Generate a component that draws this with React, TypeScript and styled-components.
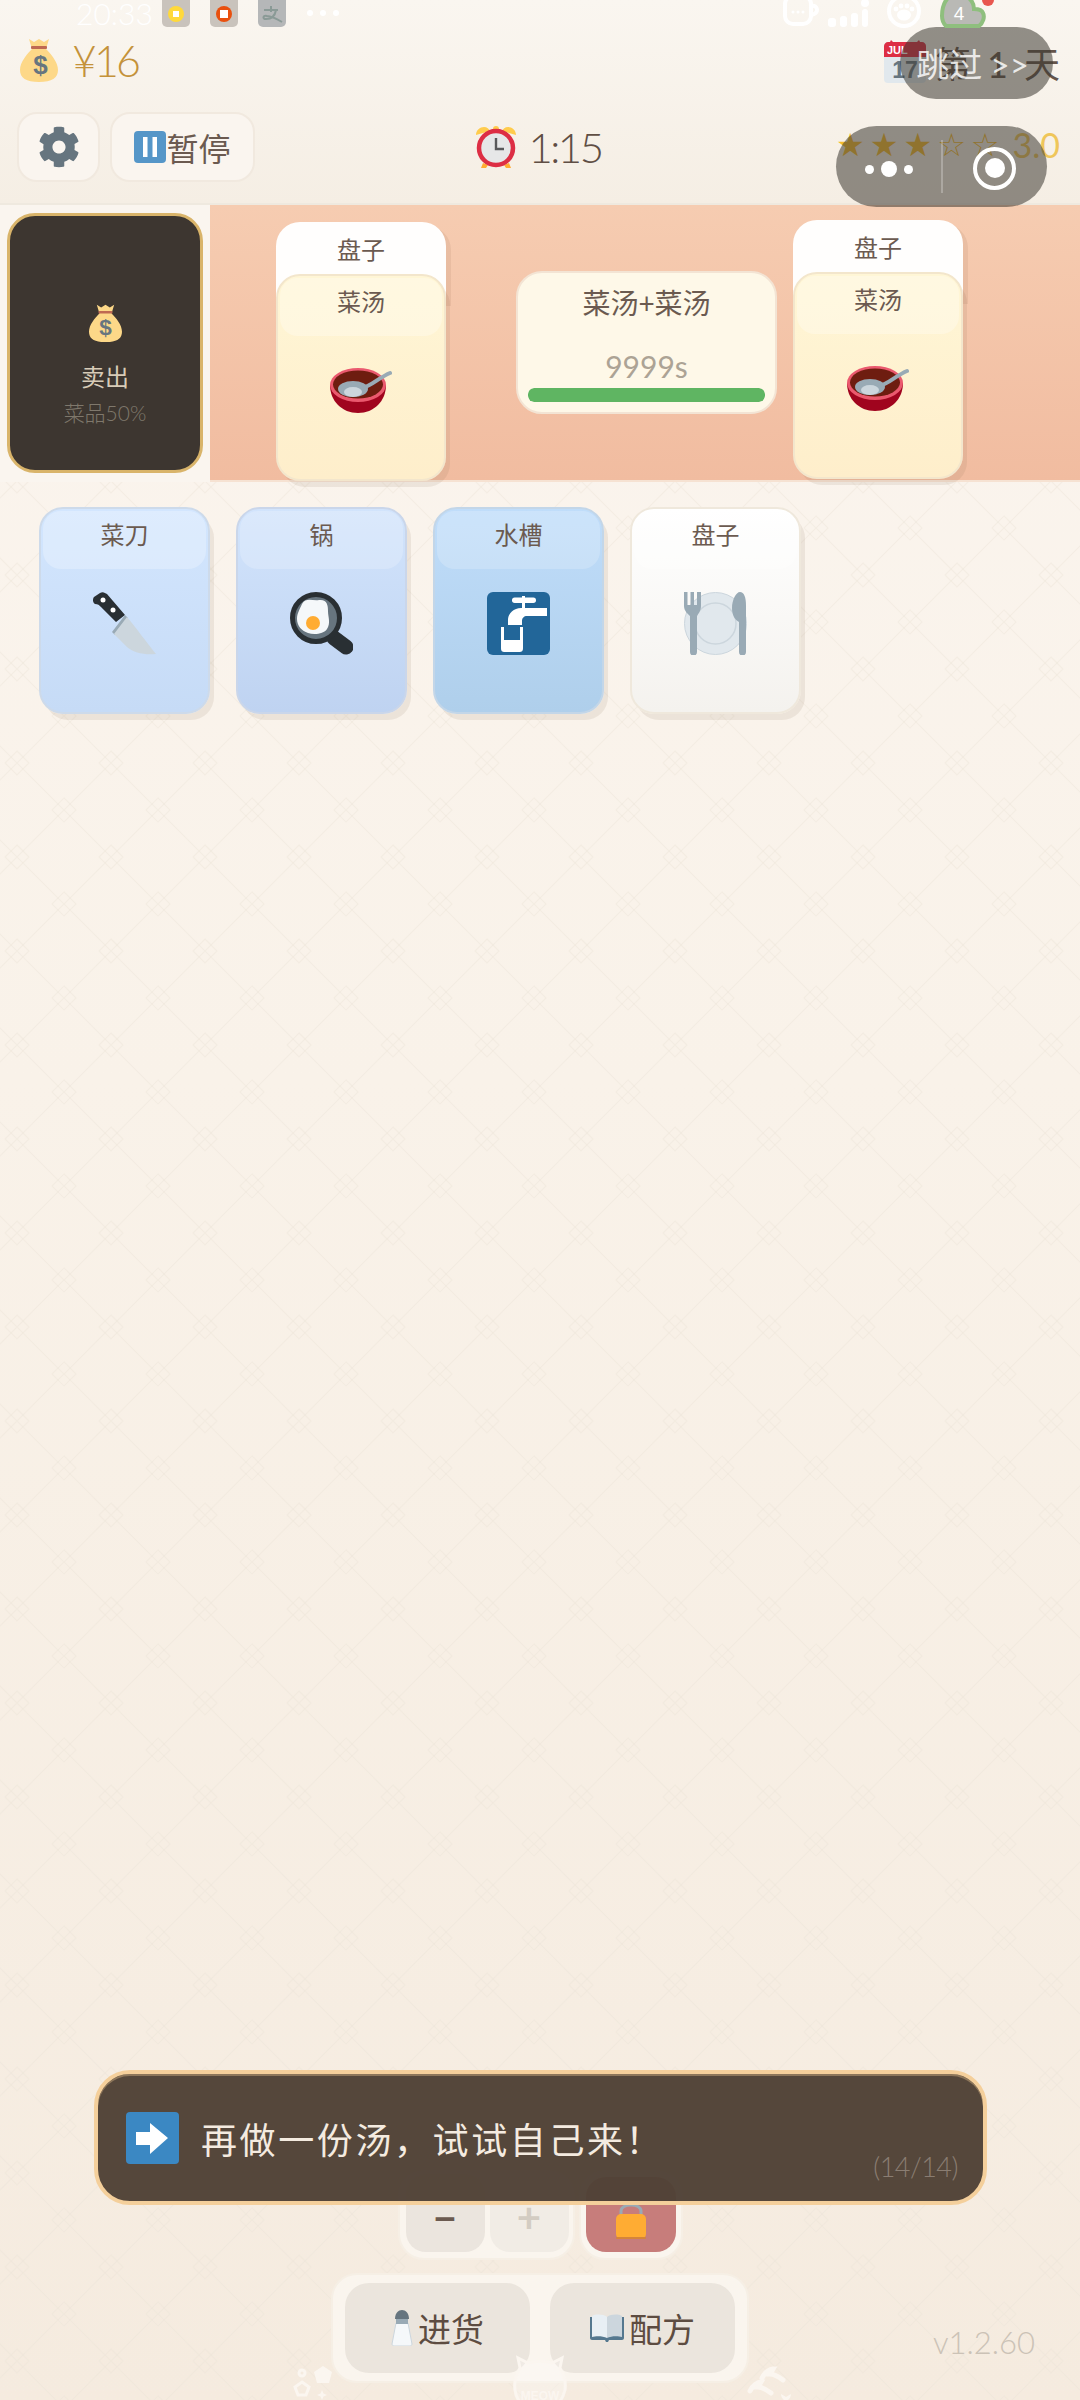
import React from "react";
import styled, {createGlobalStyle} from "styled-components";
import {FaCog} from "react-icons/fa";

const GlobalStyle = createGlobalStyle`
  html, body {
    margin: 0;
    padding: 0;
    background: #f9f2e9;
  }

  * {
    box-sizing: border-box;
  }

  body {
    font-family: Lato, "Noto Sans CJK SC", sans-serif;
    font-weight: 400;
  }
`;

const tile = `url("data:image/svg+xml,%3Csvg xmlns='http://www.w3.org/2000/svg' width='94' height='94' fill='none' stroke='%23ebe4d8' stroke-opacity='.4' stroke-width='1.2'%3E%3Cpath d='M0 0L94 94M94 0L0 94'/%3E%3Cpath d='M47 35L59 47L47 59L35 47ZM0 -12L12 0L0 12L-12 0ZM94 -12L106 0L94 12L82 0ZM0 82L12 94L0 106L-12 94ZM94 82L106 94L94 106L82 94Z'/%3E%3C/svg%3E")`;

const Page = styled.div`
  position: relative;
  width: 1080px;
  height: 2400px;
  overflow: hidden;
  display: flex;
  flex-direction: column;
  color: #6b5a50;
  background: ${tile} 64px 58px, linear-gradient(180deg, #fbf5ef 0%, #f9f2e9 45%, #f5ebdf 100%);
`;

/* system overlays */
const StatusBar = styled.div`
  position: absolute;
  left: 0;
  top: 0;
  width: 100%;
  height: 30px;
  overflow: hidden;
  display: flex;
  align-items: flex-start;
  z-index: 5;
`;

const StatusTime = styled.div`
  margin: -7px 0 0 76px;
  width: 86px;
  font-size: 30px;
  line-height: 40px;
  font-weight: 300;
  color: #fff;
`;

const AppBadge = styled.div<{ $bg: string }>`
  width: 28px;
  height: 27px;
  margin-right: 20px;
  border-radius: 0 0 5px 5px;
  background: ${p => p.$bg};
  display: flex;
  align-items: center;
  justify-content: center;
`;

const StatusDots = styled.div`
  margin: 10px 0 0 1px;
  display: flex;
  gap: 7px;
`;

const StatusDot = styled.span`
  width: 6px;
  height: 6px;
  border-radius: 50%;
  background: #fff;
`;

const StatusRight = styled.div`
  margin-left: auto;
  margin-right: 69px;
`;

const SkipPill = styled.div`
  position: absolute;
  left: 900px;
  top: 27px;
  width: 153px;
  height: 72px;
  border-radius: 36px;
  background: rgba(60, 56, 50, 0.55);
  color: rgba(255, 255, 255, 0.82);
  font-size: 33px;
  display: flex;
  align-items: center;
  justify-content: center;
  padding-right: 8px;
  white-space: pre;
  z-index: 4;
`;

const Capsule = styled.div`
  position: absolute;
  left: 836px;
  top: 126px;
  width: 211px;
  height: 81px;
  border-radius: 41px;
  background: rgba(60, 56, 50, 0.55);
  display: grid;
  grid-template-columns: 105px 1px 105px;
  align-items: center;
  justify-items: center;
  z-index: 4;
`;

const CapsuleDots = styled.div`
  margin-top: 5px;
  display: flex;
  align-items: center;
  gap: 7px;
`;

const CapsuleDot = styled.span<{ $big?: boolean }>`
  width: ${p => (p.$big ? 16 : 9)}px;
  height: ${p => (p.$big ? 16 : 9)}px;
  border-radius: 50%;
  background: #fff;
`;

const CapsuleLine = styled.span`
  width: 2px;
  height: 53px;
  background: rgba(255, 255, 255, 0.25);
`;

const CapsuleRing = styled.span`
  margin-top: 3px;
  width: 43px;
  height: 43px;
  border-radius: 50%;
  border: 4px solid #fff;
  display: flex;
  align-items: center;
  justify-content: center;

  &::after {
    content: "";
    width: 20px;
    height: 20px;
    border-radius: 50%;
    background: #fff;
  }
`;

/* header */
const Header = styled.header`
  height: 205px;
  padding: 40px 20px 0 17px;
  background: linear-gradient(180deg, #faf6f0 0%, #f5eee4 100%);
  border-bottom: 2px solid #efe9df;
`;

const TopRow = styled.div`
  height: 43px;
  display: flex;
  align-items: center;
  justify-content: space-between;
  padding-left: 3px;
`;

const Money = styled.div`
  display: flex;
  align-items: center;
  gap: 14px;
  margin-top: -3px;
  font-size: 43px;
  font-weight: 300;
  letter-spacing: -3px;
  color: #c4923a;
`;

const DayLabel = styled.div`
  display: flex;
  align-items: center;
  gap: 9px;
  font-size: 36px;
  word-spacing: 7px;
  color: #64544a;
`;

const ControlRow = styled.div`
  margin-top: 29px;
  display: grid;
  grid-template-columns: 1fr auto 1fr;
  align-items: center;
`;

const ButtonGroup = styled.div`
  display: flex;
  gap: 10px;
`;

const RoundButton = styled.div<{ $width: number }>`
  width: ${p => p.$width}px;
  height: 70px;
  border-radius: 20px;
  background: #faf5ef;
  border: 2px solid #f1e9df;
  display: flex;
  align-items: center;
  justify-content: center;
  font-size: 32px;
  color: #6b5a50;
`;

const Clock = styled.div`
  display: flex;
  align-items: center;
  gap: 11px;
  font-size: 42px;
  font-weight: 300;
  letter-spacing: -2.5px;
  color: #5f4e44;
`;

const Rating = styled.div`
  justify-self: end;
  display: flex;
  align-items: center;
  gap: 8px;
  margin-top: -5px;
  font-size: 34px;
  color: #efc65a;
`;

const Stars = styled.span`
  font-family: "DejaVu Sans", sans-serif;
  font-size: 32px;
  line-height: 40px;
  letter-spacing: 5px;
  color: #f5bb2c;
`;

/* cooking band */
const Band = styled.section`
  height: 277px;
  display: flex;
`;

const SellSlot = styled.div`
  width: 210px;
  padding: 8px 7px;
  background: #faf5ef;
`;

const SellCard = styled.div`
  width: 196px;
  height: 260px;
  padding-top: 88px;
  border-radius: 28px;
  border: 3px solid #d9b46a;
  background: #3d3630;
  display: flex;
  flex-direction: column;
  align-items: center;
`;

const SellTitle = styled.div`
  margin-top: 17px;
  font-size: 24px;
  line-height: 36px;
  color: #d8ccb8;
`;

const SellSub = styled.div`
  font-size: 21px;
  line-height: 36px;
  font-weight: 300;
  color: #7f786c;
`;

const Counter = styled.div`
  flex: 1;
  padding-left: 66px;
  display: flex;
  align-items: flex-start;
  background: linear-gradient(180deg, #f6ccb1 0%, #f1bca0 100%);
  border-bottom: 2px solid #f6e2d2;
`;

const Stack = styled.div<{ $top: number }>`
  width: 170px;
  margin-top: ${p => p.$top}px;
`;

const cardTones = {
  white: {from: "#ffffff", to: "#f4f2ee", border: "#efe8dc", head: "rgba(255,255,255,.3)"},
  soup: {from: "#fff6d6", to: "#feeecb", border: "#f3e6cc", head: "rgba(255,255,255,.28)"},
  knife: {from: "#d3e6fe", to: "#c6dbf6", border: "#cddaea", head: "rgba(255,255,255,.25)"},
  pan: {from: "#d2e4fc", to: "#bfd3f1", border: "#cad6ea", head: "rgba(255,255,255,.2)"},
  sink: {from: "#c0ddfa", to: "#afcfeb", border: "#c3d6e8", head: "rgba(255,255,255,.2)"}
};

type Tone = keyof typeof cardTones;

const PlateBack = styled.div`
  height: 80px;
  padding-top: 6px;
  border-radius: 24px 24px 0 0;
  background: #fffefd;
  box-shadow: 5px 4px 0 rgba(130, 90, 60, 0.1);
  font-size: 24px;
  line-height: 44px;
  text-align: center;
  color: #6b5a50;
`;

const Card = styled.div<{ $tone: Tone; $stacked?: boolean }>`
  position: relative;
  width: ${p => (p.$stacked ? 170 : 171)}px;
  height: 207px;
  margin-top: ${p => (p.$stacked ? -28 : 0)}px;
  padding: 2px;
  border-radius: 24px;
  border: 2px solid ${p => cardTones[p.$tone].border};
  background: linear-gradient(180deg, ${p => cardTones[p.$tone].from} 0%, ${p => cardTones[p.$tone].to} 100%);
  box-shadow: 5px 7px 0 -1px rgba(130, 100, 70, 0.11);
  display: flex;
  flex-direction: column;
  align-items: center;
`;

const CardHead = styled.div<{ $tone: Tone }>`
  align-self: stretch;
  height: 58px;
  border-radius: 18px;
  background: ${p => cardTones[p.$tone].head};
  font-size: 24px;
  line-height: 48px;
  text-align: center;
  color: #6b5a50;
`;

const CardIcon = styled.div`
  margin-top: 23px;
  width: 63px;
  height: 63px;
  display: flex;
  align-items: center;
  justify-content: center;
`;

const RecipeCard = styled.div`
  width: 261px;
  height: 143px;
  margin: 66px 16px 0 70px;
  padding: 0 10px;
  border-radius: 26px;
  border: 2px solid #f3e4d4;
  background: #fef8e8;
  text-align: center;
`;

const RecipeTitle = styled.div`
  margin-top: 10px;
  font-size: 28px;
  line-height: 40px;
  color: #6b5a50;
`;

const RecipeTime = styled.div`
  margin-top: 23px;
  font-size: 30px;
  line-height: 40px;
  color: #aca395;
`;

const ProgressTrack = styled.div`
  height: 14px;
  margin-top: 2px;
  border-radius: 6px;
  overflow: hidden;
`;

const ProgressFill = styled.div`
  height: 100%;
  border-radius: 6px;
  background: #5fb562;
`;

/* tools */
const ToolRow = styled.section`
  padding: 25px 39px 0;
  display: flex;
  gap: 26px;
`;

/* bottom controls */
const Bottom = styled.section`
  margin-top: auto;
  padding-bottom: 17px;
  display: flex;
  flex-direction: column;
  align-items: center;
  gap: 13px;
`;

const StepperRow = styled.div`
  display: flex;
  gap: 4px;
`;

const Tray = styled.div<{ $pad: string; $gap?: number }>`
  display: flex;
  gap: ${p => p.$gap ?? 0}px;
  padding: ${p => p.$pad};
  border-radius: 26px;
  background: #faf5ee;
  border: 2px solid #f6efe5;
`;

const NavTray = styled(Tray)`
  grid-column: 2;
`;

const StepButton = styled.div<{ $faded?: boolean }>`
  width: 79px;
  height: 78px;
  padding-top: 22px;
  border-radius: 20px;
  background: ${p => (p.$faded ? "#f1ece5" : "#ebe5de")};
  text-align: center;
  font-size: 42px;
  line-height: 42px;
  font-weight: 700;
  color: ${p => (p.$faded ? "#d3ccc2" : "#6b5a50")};
`;

const LockButton = styled.div`
  width: 90px;
  height: 75px;
  padding-top: 26px;
  border-radius: 20px;
  background: #c77d7b;
  display: flex;
  justify-content: center;
`;

const NavRow = styled.div`
  align-self: stretch;
  display: grid;
  grid-template-columns: 1fr auto 1fr;
  align-items: center;
`;

const NavButton = styled.div`
  width: 185px;
  height: 90px;
  border-radius: 24px;
  background: #ebe5dd;
  display: flex;
  align-items: center;
  justify-content: center;
  gap: 5px;
  font-size: 33px;
  color: #5d4c41;
`;

const Version = styled.div`
  grid-column: 3;
  justify-self: end;
  margin: 27px 45px 0 0;
  font-size: 31px;
  font-weight: 300;
  color: #cbc2b6;
`;

const Decor = styled.svg`
  position: absolute;
  left: 290px;
  top: 2350px;
  z-index: 2;
`;

const Tip = styled.div`
  position: absolute;
  left: 94px;
  top: 2070px;
  width: 893px;
  height: 135px;
  padding: 0 28px 0 28px;
  border-radius: 36px;
  border: 4px solid #f4cf9b;
  background: rgba(80, 65, 54, 0.97);
  box-shadow: inset 0 2px 0 #8d765a;
  display: flex;
  align-items: center;
  gap: 22px;
  z-index: 3;
`;

const TipText = styled.div`
  font-size: 36px;
  letter-spacing: 2.6px;
  color: #f4ebe0;
`;

const TipCount = styled.div`
  position: absolute;
  right: 25px;
  bottom: 18px;
  font-size: 27px;
  font-weight: 300;
  letter-spacing: -0.5px;
  color: #8a7d72;
`;

/* drawings */
const MoneyBag = ({size}: { size: number }) => (
    <svg width={size} height={size * 44 / 38} viewBox="0 0 38 44">
        <path fill="#FDD888" d="M9 1l5 3 5-3 5 3 5-3-3 10c5 5 12 13 12 21 0 8-6 12-19 12S0 40 0 32c0-8 7-16 12-21z"/>
        <rect x="11" y="8" width="16" height="3" rx="1" fill="#BF6952"/>
        <text x="19" y="36" textAnchor="middle" fontSize="26" fontWeight="700" fontFamily="Liberation Sans" fill="#67757F">$</text>
    </svg>
);

const PauseIcon = () => (
    <svg width="32" height="32" viewBox="0 0 32 32">
        <rect width="32" height="32" rx="4" fill="#5596c8"/>
        <rect x="9" y="6" width="4.5" height="20" fill="#fff"/>
        <rect x="18.5" y="6" width="4.5" height="20" fill="#fff"/>
    </svg>
);

const AlarmIcon = () => (
    <svg width="42" height="42" viewBox="0 0 42 42">
        <path fill="#FFCC4D" d="M1 9c0-5 4-8 8-8 3 0 5 2 6 4zM41 9c0-5-4-8-8-8-3 0-5 2-6 4z"/>
        <circle cx="21" cy="3" r="3" fill="#FFCC4D"/>
        <path fill="#FFAC33" d="M8 37l-2 5h5l2-3zM34 37l2 5h-5l-2-3z"/>
        <circle cx="21" cy="22" r="17" fill="#E6E7E8" stroke="#DD2E44" strokeWidth="4.5"/>
        <path d="M21 12v11h8" fill="none" stroke="#58595B" strokeWidth="2.4"/>
    </svg>
);

const CalendarIcon = () => (
    <svg width="42" height="43" viewBox="0 0 42 43">
        <rect y="2" width="42" height="41" rx="4" fill="#E1E8ED"/>
        <path fill="#DD2E44" d="M0 6c0-2 2-4 4-4h2l1-2 2 2h24l2-2 1 2h2c2 0 4 2 4 4v11H0z"/>
        <text x="3" y="14" fontSize="11" fontWeight="700" fontFamily="Liberation Sans" fill="#fff">JUL</text>
        <text x="21" y="38" textAnchor="middle" fontSize="23" fontWeight="700" fontFamily="Liberation Sans" fill="#66757F">17</text>
    </svg>
);

const BowlIcon = () => (
    <svg width="62" height="45" viewBox="0 0 62 45">
        <path fill="#A0041E" d="M0 17c0 16 12 28 28 28s28-12 28-28z"/>
        <ellipse cx="28" cy="17" rx="28" ry="17" fill="#EA596E"/>
        <ellipse cx="28" cy="16.5" rx="25" ry="14" fill="#6E1D10"/>
        <path d="M32 20C42 18 48 10 60 5" fill="none" stroke="#99AAB5" strokeWidth="4" strokeLinecap="round"/>
        <ellipse cx="23" cy="21" rx="15" ry="8" fill="#99AAB5"/>
        <ellipse cx="23" cy="24" rx="9" ry="5" fill="#CCD6DD"/>
    </svg>
);

const KnifeIcon = () => (
    <svg width="63" height="63" viewBox="0 0 63 63">
        <path fill="#292F33" d="M7 1c3-2 5 0 7 1l18 21-9 7L8 15c-2-2-3-3-6-3-3-2-2-6-1-7z"/>
        <circle cx="10" cy="8" r="2.5" fill="#fff"/>
        <circle cx="20" cy="18" r="2.5" fill="#fff"/>
        <path fill="#99AAB5" d="M32 23l3 3L22 43l-3-3z"/>
        <path fill="#CCD6DD" d="M34 25c10 12 20 26 29 37-12 1-22-1-29-7L21 42z"/>
    </svg>
);

const PanIcon = () => (
    <svg width="63" height="63" viewBox="0 0 63 63">
        <path d="M44 46l12 9" stroke="#292F33" strokeWidth="15" strokeLinecap="round"/>
        <circle cx="26" cy="26" r="23.5" fill="#67757F" stroke="#292F33" strokeWidth="5"/>
        <path fill="#F5F8FA" d="M12 12c4-7 10-3 17-4 8-1 9 5 9 11 0 6 3 12-1 18-3 5-13 6-19 4-6-2-11-7-11-14 0-6 3-10 5-15z"/>
        <circle cx="23" cy="31" r="7" fill="#FFAC33"/>
    </svg>
);

const TapIcon = () => (
    <svg width="63" height="63" viewBox="0 0 63 63">
        <rect width="63" height="63" rx="6" fill="#226699"/>
        <g fill="#fff">
            <rect x="25" y="5.500" width="24" height="5.500" rx="2.700"/>
            <rect x="35" y="4" width="3" height="12"/>
            <path d="M60 16v8H40c-3 0-5 2-5 5v4H21v-5c0-7 6-12 13-12z"/>
            <path d="M14 35h3v13h16V35h3v21c0 3-1 4-4 4H18c-3 0-4-1-4-4z"/>
        </g>
    </svg>
);

const PlateIcon = () => (
    <svg width="63" height="63" viewBox="0 0 63 63">
        <circle cx="31.5" cy="31.5" r="31" fill="#E1E8ED" stroke="#CCD6DD"/>
        <circle cx="31.5" cy="31.5" r="20.5" fill="none" stroke="#CCD6DD" strokeWidth="1.5"/>
        <path fill="#99AAB5" d="M0 0h3.500v13h3V0h3.500v13h3V0H17v14c0 5-3 8-4 10v36a3.500 3.500 0 0 1-7 0V24c-2-2-6-5-6-10z"/>
        <path fill="#99AAB5" d="M56 0c4 0 6 5 6 14v46a3.500 3.500 0 0 1-7 0V30c-4-2-7-7-7-14 0-8 4-16 8-16z"/>
    </svg>
);

const LockIcon = () => (
    <svg width="30" height="36" viewBox="0 0 30 36">
        <path d="M5 14V8c0-8 20-8 20 0v6" fill="none" stroke="#99AAB5" strokeWidth="3"/>
        <rect y="11" width="30" height="25" rx="5" fill="#FFAC33"/>
        <rect y="34" width="30" height="2" rx="1" fill="#D5853A"/>
    </svg>
);

const SaltIcon = () => (
    <svg width="22" height="36" viewBox="0 0 22 36">
        <path fill="#F5F8FA" stroke="#CCD6DD" d="M5 13h12l4 21c0 1-1 2-2 2H3c-1 0-2-1-2-2z"/>
        <path fill="#99AAB5" d="M5 9h12v5H5z"/>
        <path fill="#66757F" d="M4 9c0-12 14-12 14 0z"/>
    </svg>
);

const BookIcon = () => (
    <svg width="34" height="28" viewBox="0 0 34 28">
        <path fill="#55788F" d="M0 3h34v21c0 1-1 2-2 2H19l-1 2h-2l-1-2H2c-1 0-2-1-2-2z"/>
        <path fill="#E8EFF4" d="M2 2c4-2 11-2 15 1v21c-4-2-11-2-15-1z"/>
        <path fill="#CCD6DD" d="M32 2c-4-2-11-2-15 1v21c4-2 11-2 15-1z"/>
    </svg>
);

const ArrowIcon = () => (
    <svg width="53" height="52" viewBox="0 0 53 52">
        <rect width="53" height="52" rx="4" fill="#3B88C3"/>
        <path fill="#fff" d="M10 20h14v-9l18 15-18 16v-9H10z"/>
    </svg>
);

const StatusIcons = () => (
    <svg width="228" height="30" viewBox="0 0 228 30">
        <g fill="none" stroke="#fff" strokeWidth="4">
            <rect x="2" y="-4" width="26" height="28" rx="8"/>
            <path d="M28 6c7-2 9 8 0 9"/>
            <circle cx="121" cy="11" r="15"/>
        </g>
        <g fill="#fff">
            <circle cx="10" cy="12" r="1.5"/><circle cx="15" cy="12" r="1.5"/><circle cx="20" cy="12" r="1.5"/>
            <rect x="45" y="18" width="8" height="9" rx="3"/>
            <rect x="57" y="16" width="7" height="11" rx="3"/>
            <rect x="68" y="13" width="7" height="14" rx="3"/>
            <rect x="79" y="9" width="6" height="18" rx="3"/>
            <circle cx="82" cy="3" r="4"/>
            <ellipse cx="121" cy="15" rx="7" ry="5.5"/>
            <circle cx="113" cy="9" r="2.4"/><circle cx="118" cy="6" r="2.4"/><circle cx="124" cy="6" r="2.4"/><circle cx="129" cy="9" r="2.4"/>
        </g>
        <path d="M159 16c0-10 3-16 8-20h16c5 3 8 8 8 13 4 0 8 1 9 4 2 4 0 10-4 13h-33c-3-3-4-6-4-10z" fill="#B9B9B5" stroke="#8FBF7E" strokeWidth="4"/>
        <circle cx="205" cy="0" r="6" fill="#E8574F"/>
        <text x="176" y="20" textAnchor="middle" fontSize="19" fontFamily="Liberation Sans" fill="#fff">4</text>
    </svg>
);

const Decorations = () => (
    <Decor width="510" height="50" viewBox="0 0 510 50">
        <g fill="#fbf6f0">
            <path d="M33 16l9 6-3 11H27l-3-11z"/>
            <path d="M32 40l1.500 3.500 3.500 1.500-3.500 1.500-1.500 3.500-1.500-3.500-3.500-1.500 3.500-1.500z"/>
            <path d="M491 44l5 3 5-3c0 4-3 6-5 8-2-2-5-4-5-8z"/>
        </g>
        <g fill="none" stroke="#fbf6f0" strokeWidth="3" strokeLinecap="round">
            <circle cx="12" cy="23" r="3"/>
            <path d="M12 32l7 5-3 8H8l-3-8z"/>
            <path d="M472 28c3-6 8-9 11-9l-3 5c5 0 9 3 13 6" strokeWidth="5"/>
            <path d="M460 41c3-6 8-9 11-9l-3 5c5 0 9 3 13 6" strokeWidth="5"/>
            <path d="M230 18l-2-10 10 5c7-2 17-2 24 0l10-5-2 10c4 6 6 14 5 22-2 8-6 14-10 14h-30c-5 0-9-6-10-14-1-8 1-16 5-22z" fill="rgba(255,255,255,.25)"/>
        </g>
        <text x="250" y="50" textAnchor="middle" fontSize="12" fontWeight="700" fontFamily="Liberation Sans" fill="#fbf6f0">MEOW</text>
    </Decor>
);

const App = () => {
    return (
        <Page>
            <GlobalStyle/>
            <StatusBar>
                <StatusTime>20:33</StatusTime>
                <AppBadge $bg="#c9c3bc">
                    <svg width="18" height="18"><circle cx="9" cy="9" r="8" fill="#FFD93B"/><rect x="6" y="6" width="6" height="6" fill="#fff"/></svg>
                </AppBadge>
                <AppBadge $bg="#c9c3bc">
                    <svg width="18" height="18"><circle cx="9" cy="9" r="8" fill="#E9500E"/><rect x="5" y="5" width="8" height="8" fill="#fff"/></svg>
                </AppBadge>
                <AppBadge $bg="#b5b7b8">
                    <svg width="22" height="18"><path d="M3 5h14M10 1v6M15 5c-1 6-5 9-10 9-4 0-3-4 1-3 5 0 10 3 15 6" fill="none" stroke="#8a9a96" strokeWidth="2"/></svg>
                </AppBadge>
                <StatusDots><StatusDot/><StatusDot/><StatusDot/></StatusDots>
                <StatusRight><StatusIcons/></StatusRight>
            </StatusBar>
            <SkipPill>跳过 &gt;&gt;</SkipPill>
            <Capsule>
                <CapsuleDots><CapsuleDot/><CapsuleDot $big/><CapsuleDot/></CapsuleDots>
                <CapsuleLine/>
                <CapsuleRing/>
            </Capsule>

            <Header>
                <TopRow>
                    <Money><MoneyBag size={38}/>¥16</Money>
                    <DayLabel><CalendarIcon/>第 1 天</DayLabel>
                </TopRow>
                <ControlRow>
                    <ButtonGroup>
                        <RoundButton $width={83}><FaCog size={42} color="#66757F"/></RoundButton>
                        <RoundButton $width={145}><PauseIcon/>暂停</RoundButton>
                    </ButtonGroup>
                    <Clock><AlarmIcon/>1:15</Clock>
                    <Rating><Stars>★★★☆☆</Stars>3.0</Rating>
                </ControlRow>
            </Header>

            <Band>
                <SellSlot>
                    <SellCard>
                        <MoneyBag size={33}/>
                        <SellTitle>卖出</SellTitle>
                        <SellSub>菜品50%</SellSub>
                    </SellCard>
                </SellSlot>
                <Counter>
                    <Stack $top={17}>
                        <PlateBack>盘子</PlateBack>
                        <Card $tone="soup" $stacked>
                            <CardHead $tone="soup">菜汤</CardHead>
                            <CardIcon><BowlIcon/></CardIcon>
                        </Card>
                    </Stack>
                    <RecipeCard>
                        <RecipeTitle>菜汤+菜汤</RecipeTitle>
                        <RecipeTime>9999s</RecipeTime>
                        <ProgressTrack><ProgressFill style={{width: "100%"}}/></ProgressTrack>
                    </RecipeCard>
                    <Stack $top={15}>
                        <PlateBack>盘子</PlateBack>
                        <Card $tone="soup" $stacked>
                            <CardHead $tone="soup">菜汤</CardHead>
                            <CardIcon><BowlIcon/></CardIcon>
                        </Card>
                    </Stack>
                </Counter>
            </Band>

            <ToolRow>
                <Card $tone="knife">
                    <CardHead $tone="knife">菜刀</CardHead>
                    <CardIcon><KnifeIcon/></CardIcon>
                </Card>
                <Card $tone="pan">
                    <CardHead $tone="pan">锅</CardHead>
                    <CardIcon><PanIcon/></CardIcon>
                </Card>
                <Card $tone="sink">
                    <CardHead $tone="sink">水槽</CardHead>
                    <CardIcon><TapIcon/></CardIcon>
                </Card>
                <Card $tone="white">
                    <CardHead $tone="white">盘子</CardHead>
                    <CardIcon><PlateIcon/></CardIcon>
                </Card>
            </ToolRow>

            <Bottom>
                <StepperRow>
                    <Tray $pad="2px 4px 6px 6px" $gap={5}>
                        <StepButton>−</StepButton>
                        <StepButton $faded>+</StepButton>
                    </Tray>
                    <Tray $pad="5px 5px 6px 5px">
                        <LockButton><LockIcon/></LockButton>
                    </Tray>
                </StepperRow>
                <NavRow>
                    <NavTray $pad="8px 12px" $gap={20}>
                        <NavButton><SaltIcon/>进货</NavButton>
                        <NavButton><BookIcon/>配方</NavButton>
                    </NavTray>
                    <Version>v1.2.60</Version>
                </NavRow>
            </Bottom>

            <Decorations/>

            <Tip>
                <ArrowIcon/>
                <TipText>再做一份汤，试试自己来！</TipText>
                <TipCount>(14/14)</TipCount>
            </Tip>
        </Page>
    );
};

export default App;
